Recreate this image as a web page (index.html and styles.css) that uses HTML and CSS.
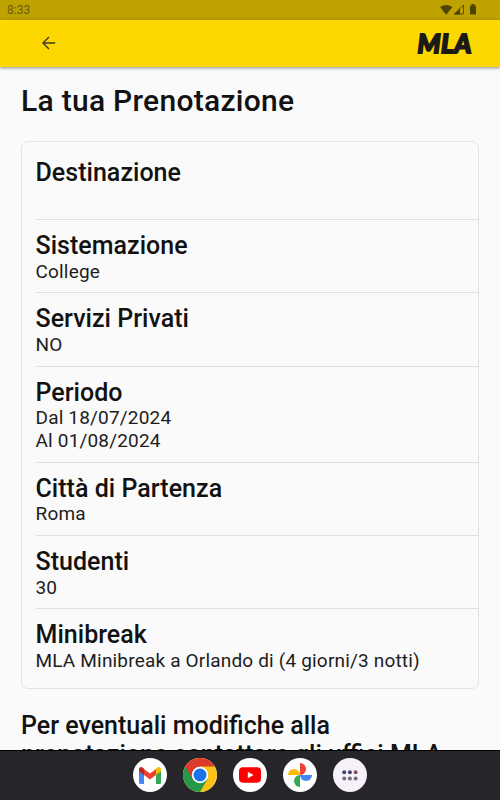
FILE: index.html
```
<!DOCTYPE html>
<html lang="it">
<head>
<meta charset="utf-8">
<title>La tua Prenotazione</title>
<link rel="stylesheet" href="styles.css">
</head>
<body>
<div class="screen">
  <div class="status">
    <span class="time">8:33</span>
    <svg class="status-icons" width="38" height="12" viewBox="0 0 38 12">
      <path d="M0 3Q6.200-1 12.400 3L6.200 10.800Z"/>
      <path d="M14.600 10H23.500V1Z" fill="none" stroke="#5c5000"/>
      <path d="M13.500 10.500L20 4.500V10.500Z"/>
      <path d="M30 1.400H31.500V0H34.500V1.400H36V10.500H30Z"/>
    </svg>
  </div>
  <header class="bar">
    <svg class="back" width="14" height="14" viewBox="0 0 14 14" fill="none" stroke="#3b3822" stroke-width="1.400"><path d="M13.200 7H1.200M7 .9L.9 7L7 13.100"/></svg>
    <span class="logo">MLA</span>
  </header>
  <main class="content">
    <h1>La tua Prenotazione</h1>
    <section class="card">
      <div class="row"><h2>Destinazione</h2><p>&nbsp;</p></div>
      <div class="row"><h2>Sistemazione</h2><p>College</p></div>
      <div class="row"><h2>Servizi Privati</h2><p>NO</p></div>
      <div class="row"><h2>Periodo</h2><p>Dal 18/07/2024<br>Al 01/08/2024</p></div>
      <div class="row"><h2>Città di Partenza</h2><p>Roma</p></div>
      <div class="row"><h2>Studenti</h2><p>30</p></div>
      <div class="row"><h2>Minibreak</h2><p>MLA Minibreak a Orlando di (4 giorni/3 notti)</p></div>
    </section>
    <p class="note">Per eventuali modifiche alla<br>prenotazione contattare gli uffici MLA</p>
  </main>
  <nav class="dock">
    <span class="app">
      <svg width="22" height="17" viewBox="0 0 22 17"><path fill="#4285f4" d="M0 3L5 6V17H1.500Q0 17 0 15.500Z"/><path fill="#34a853" d="M17 6L22 3V15.500Q22 17 20.500 17H17Z"/><path fill="#ea4335" d="M5 2L11 6.500L17 2V8L11 12.500L5 8Z"/><path fill="#c5221f" d="M0 2.500C0 0 2.500-.6 4 .9L5 1.700V8L0 4.300Z"/><path fill="#fbbc04" d="M22 2.500C22 0 19.500-.6 18 .9L17 1.700V8L22 4.300Z"/></svg>
    </span>
    <span class="app">
      <svg width="34" height="34" viewBox="-16.500 -16.500 33 33"><circle r="16.500" fill="#fbc116"/><path fill="#279847" d="M-14.290-8.250A16.500 16.500 0 0 0 0 16.500L7.140 4.130L0 0Z"/><path fill="#db3a2e" d="M-14.290-8.250A16.500 16.500 0 0 1 14.290-8.250H0L-7.140 4.130Z"/><circle r="8" fill="#fff"/><circle r="6.300" fill="#1a73e8"/></svg>
    </span>
    <span class="app">
      <svg width="22" height="16" viewBox="0 0 23 16"><rect width="23" height="16" rx="4" fill="#f00"/><path fill="#fff" d="M9.200 4.600L15.200 8L9.200 11.400Z"/></svg>
    </span>
    <span class="app">
      <svg width="24" height="24" viewBox="-12 -12 24 24"><path fill="#ea4335" d="M0-12A6 6 0 0 1 0 0Z"/><path fill="#4285f4" d="M12 0A6 6 0 0 1 0 0Z"/><path fill="#34a853" d="M0 12A6 6 0 0 1 0 0Z"/><path fill="#fbbc04" d="M-12 0A6 6 0 0 1 0 0Z"/></svg>
    </span>
    <span class="app drawer">
      <svg width="16" height="11" viewBox="0 0 16 11"><g fill="#41456f"><circle cx="2.200" cy="2.200" r="2"/><circle cx="7.900" cy="2.200" r="2"/></g><circle cx="13.600" cy="2.200" r="2" fill="#7c5565"/><g fill="#6f6f82"><circle cx="2.200" cy="8.600" r="2"/><circle cx="7.900" cy="8.600" r="2"/><circle cx="13.600" cy="8.600" r="2"/></g></svg>
    </span>
  </nav>
</div>
</body>
</html>
```
FILE: styles.css
```
* { box-sizing: border-box; }
body { margin: 0; font-family: Roboto, "Liberation Sans", sans-serif; color: #121212; }
h1, h2, p { margin: 0; }
.screen { width: 500px; height: 800px; display: flex; flex-direction: column; overflow: hidden; background: #fafafa; }
.status { flex: none; height: 20px; background: #bea200; display: flex; align-items: center; justify-content: space-between; padding: 0 22px 0 7px; }
.time { font-size: 12px; line-height: 14px; color: #6b5c0c; }
.status-icons { fill: #4f4500; margin-top: -1px; }
.bar { flex: none; height: 47px; background: #fdd800; display: flex; align-items: center; justify-content: space-between; padding: 0 28px 1px 42px; box-shadow: 0 1px 3px rgba(0,0,0,.45); z-index: 1; }
.logo { font: italic 900 26px/30px Lato, sans-serif; letter-spacing: .6px; color: #1b1a17; -webkit-text-stroke: 1.800px #1b1a17; }
.content { flex: 1; min-height: 0; overflow: hidden; padding: 16px 21px 0; }
h1 { font-size: 30px; line-height: 36px; font-weight: 500; letter-spacing: .28px; }
.card { margin-top: 21.500px; margin-left: -.5px; border: 1px solid #e4e4e4; border-radius: 7px; padding: 5.200px 0 5px 14px; }
.row { padding: 11px 0 9.900px; border-bottom: 1px solid #e0e0e0; }
.row:last-child { border-bottom: 0; padding-bottom: 11px; }
h2 { font-size: 25px; line-height: 29.500px; font-weight: 500; letter-spacing: .03px; }
.row p { font-size: 19px; line-height: 22px; letter-spacing: .18px; color: #1d1d1d; }
.row:nth-child(4) p { line-height: 22.200px; }
.note { margin-top: 22px; font-size: 25px; line-height: 29px; font-weight: 500; white-space: nowrap; }
.dock { flex: none; height: 50px; background: #26252a; border-top: 1px solid #000; display: flex; justify-content: center; align-items: center; gap: 16px; padding-bottom: 1px; }
.app { width: 34px; height: 34px; border-radius: 50%; background: #fff; display: flex; align-items: center; justify-content: center; }
.drawer { background: #f7f1fa; }
```
